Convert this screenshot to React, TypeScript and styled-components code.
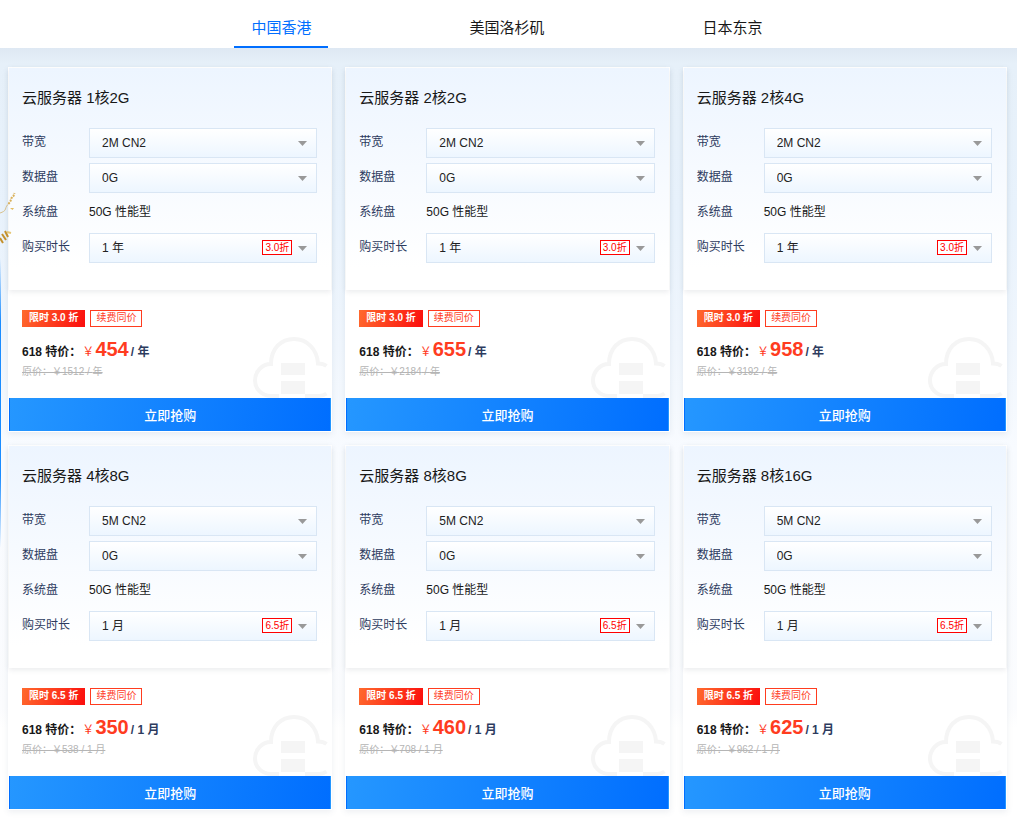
import React, { useState } from "react";
import styled, { createGlobalStyle } from "styled-components";

const GlobalStyle = createGlobalStyle`
  *, *::before, *::after { box-sizing: border-box; }
  body {
    margin: 0;
    background: #fff;
    color: #181818;
    font-family: "Liberation Sans", "Noto Sans CJK SC", sans-serif;
    font-size: 12px;
  }
  button, select { font-family: inherit; }
`;

const TabBar = styled.nav`
  display: flex;
  justify-content: center;
  gap: 124px;
  height: 48px;
  padding-right: 3px;
  background: #fff;
`;

const Tab = styled.button<{ $active: boolean }>`
  height: 48px;
  padding: 10px 17px 0;
  border: 0;
  border-bottom: 2px solid ${(p) => (p.$active ? "#006eff" : "transparent")};
  background: none;
  color: ${(p) => (p.$active ? "#006eff" : "#181818")};
  font-size: 15px;
  line-height: 20px;
  cursor: pointer;
`;

const Stage = styled.main`
  position: relative;
  padding: 19px 10px 14px 8px;
  background: linear-gradient(
    to bottom,
    #dee8f3 0,
    #e6f0f9 16px,
    #e8f2fc 160px,
    #f0f6fd 300px,
    #f8fbff 400px,
    #fbfcfe 660px,
    #fff 680px
  );
`;

const EdgeArt = styled.svg`
  position: absolute;
  left: 0;
  top: 0;
  width: 16px;
  height: 560px;
  pointer-events: none;
`;

const Grid = styled.div`
  display: grid;
  grid-template-columns: repeat(3, minmax(0, 1fr));
  gap: 13px;
`;

const Card = styled.article`
  display: flex;
  flex-direction: column;
  border: 1px solid #fff;
  background: #fff;
  box-shadow: 0 2px 6px rgba(80, 100, 130, 0.1);
`;

const Config = styled.div`
  height: 222px;
  padding: 20px 14px 0 13px;
  background: linear-gradient(#edf5ff, #fff 90%);
  box-shadow: 0 2px 5px rgba(60, 70, 90, 0.1);
`;

const Title = styled.h2`
  margin: 0 0 20px;
  font-size: 15px;
  font-weight: 400;
  line-height: 20px;
`;

const Field = styled.div`
  display: flex;
  align-items: center;
  height: 30px;
  margin-bottom: 5px;
`;

const Label = styled.label`
  flex: 0 0 67px;
  color: #2d3b5e;
  line-height: 16px;
  padding-bottom: 2px;
`;

const Fixed = styled.output`
  line-height: 16px;
  padding-bottom: 2px;
`;

const SelectBox = styled.div`
  position: relative;
  flex: 1;
  min-width: 0;
`;

const Select = styled.select`
  display: block;
  width: 100%;
  height: 30px;
  padding: 0 12px;
  appearance: none;
  border: 1px solid #d9e6f4;
  border-radius: 0;
  background: linear-gradient(#fff, #edf6ff);
  color: #222;
  font-size: 12px;
`;

const Arrow = styled.svg`
  position: absolute;
  right: 10px;
  top: 13px;
  width: 9px;
  height: 5px;
  pointer-events: none;
`;

const Discount = styled.span`
  position: absolute;
  right: 25px;
  top: 7px;
  height: 15px;
  padding: 0 2px;
  border: 1px solid #f00;
  background: #fff;
  color: #f00;
  font-size: 10px;
  line-height: 13px;
  pointer-events: none;
`;

const Offer = styled.div`
  position: relative;
  height: 108px;
  padding: 20px 13px 0;
`;

const Tags = styled.div`
  display: flex;
  gap: 5px;
  font-size: 10px;
`;

const HotTag = styled.span`
  height: 17px;
  padding: 0 7px;
  background: linear-gradient(110deg, #ff6a2e, #fb0d0d);
  color: #fff;
  font-weight: 700;
  line-height: 16px;
`;

const LineTag = styled.span`
  height: 17px;
  padding: 0 5px;
  border: 1px solid #ff3c1f;
  color: #ff3c1f;
  line-height: 14px;
`;

const PriceLine = styled.p`
  display: flex;
  align-items: baseline;
  margin: 10px 0 0;
  color: #181818;
  font-weight: 700;
  line-height: 24px;
`;

const Yen = styled.span`
  margin: 0 1px;
  color: #ff3c1f;
  font-weight: 400;
`;

const Amount = styled.strong`
  color: #ff3c1f;
  font-size: 20px;
`;

const Unit = styled.span`
  margin-left: 2px;
  color: #2d3b5e;
`;

const OldPrice = styled.del`
  display: block;
  color: #b5b5b5;
  font-size: 10px;
  line-height: 16px;
`;

const Cloud = styled.svg`
  position: absolute;
  right: 2px;
  bottom: 0;
  width: 76px;
  height: 62px;
`;

const BuyButton = styled.button`
  height: 33px;
  padding: 0;
  border: solid transparent;
  border-width: 0 1px;
  background: linear-gradient(100deg, #2597ff, #006eff);
  color: #fff;
  font-size: 13px;
  font-weight: 500;
  cursor: pointer;
`;

type Plan = {
  name: string;
  bandwidth: string;
  term: string;
  rate: string;
  price: number;
  old: number;
  unit: string;
};

const plans: Plan[] = [
  { name: "1核2G", bandwidth: "2M CN2", term: "1 年", rate: "3.0", price: 454, old: 1512, unit: "年" },
  { name: "2核2G", bandwidth: "2M CN2", term: "1 年", rate: "3.0", price: 655, old: 2184, unit: "年" },
  { name: "2核4G", bandwidth: "2M CN2", term: "1 年", rate: "3.0", price: 958, old: 3192, unit: "年" },
  { name: "4核8G", bandwidth: "5M CN2", term: "1 月", rate: "6.5", price: 350, old: 538, unit: "1 月" },
  { name: "8核8G", bandwidth: "5M CN2", term: "1 月", rate: "6.5", price: 460, old: 708, unit: "1 月" },
  { name: "8核16G", bandwidth: "5M CN2", term: "1 月", rate: "6.5", price: 625, old: 962, unit: "1 月" },
];

const regions = ["中国香港", "美国洛杉矶", "日本东京"];

function Dropdown({ id, value, rate }: { id: string; value: string; rate?: string }) {
  return (
    <SelectBox>
      <Select id={id} defaultValue={value}>
        <option>{value}</option>
      </Select>
      {rate && <Discount>{rate}折</Discount>}
      <Arrow viewBox="0 0 9 5" aria-hidden="true">
        <path d="M0 0h9L4.500 5z" fill="#999" />
      </Arrow>
    </SelectBox>
  );
}

function PlanCard({ plan, index }: { plan: Plan; index: number }) {
  const id = `plan-${index}`;
  return (
    <Card>
      <Config>
        <Title>云服务器 {plan.name}</Title>
        <Field>
          <Label htmlFor={`${id}-bandwidth`}>带宽</Label>
          <Dropdown id={`${id}-bandwidth`} value={plan.bandwidth} />
        </Field>
        <Field>
          <Label htmlFor={`${id}-data`}>数据盘</Label>
          <Dropdown id={`${id}-data`} value="0G" />
        </Field>
        <Field>
          <Label htmlFor={`${id}-system`}>系统盘</Label>
          <Fixed id={`${id}-system`}>50G 性能型</Fixed>
        </Field>
        <Field>
          <Label htmlFor={`${id}-term`}>购买时长</Label>
          <Dropdown id={`${id}-term`} value={plan.term} rate={plan.rate} />
        </Field>
      </Config>
      <Offer>
        <Cloud viewBox="0 0 76 62" fill="none" aria-hidden="true">
          <path
            d="M26 60H18C9 60 2 53 2 44.500C2 35.500 9 28 18 28C18 12.500 28 3 41 3C54 3 64 13 65 27.500C68 27.500 71 28 73.500 30M52 60H66C69 60 71.500 59 73.500 57.500"
            stroke="#f5f5f5"
            strokeWidth="4"
          />
          <path d="M28 27h24v12H28zM28 45h24v13H28z" fill="#f5f5f5" />
        </Cloud>
        <Tags>
          <HotTag>限时 {plan.rate} 折</HotTag>
          <LineTag>续费同价</LineTag>
        </Tags>
        <PriceLine>
          618 特价：
          <Yen>￥</Yen>
          <Amount>{plan.price}</Amount>
          <Unit>/ {plan.unit}</Unit>
        </PriceLine>
        <OldPrice>
          原价：￥{plan.old} / {plan.unit}
        </OldPrice>
      </Offer>
      <BuyButton type="button">立即抢购</BuyButton>
    </Card>
  );
}

export default function App() {
  const [region, setRegion] = useState(0);
  return (
    <>
      <GlobalStyle />
      <TabBar>
        {regions.map((name, i) => (
          <Tab key={name} type="button" $active={i === region} onClick={() => setRegion(i)}>
            {name}
          </Tab>
        ))}
      </TabBar>
      <Stage>
        <Grid>
          {plans.map((plan, i) => (
            <PlanCard key={plan.name} plan={plan} index={i} />
          ))}
        </Grid>
        <EdgeArt viewBox="0 0 16 560" fill="none" aria-hidden="true">
          <defs>
            <linearGradient id="edge-fade" x1="0" y1="210" x2="0" y2="500" gradientUnits="userSpaceOnUse">
              <stop offset="0" stopColor="#1a8cff" stopOpacity="0" />
              <stop offset="0.220" stopColor="#1a8cff" />
              <stop offset="0.750" stopColor="#1a8cff" />
              <stop offset="1" stopColor="#1a8cff" stopOpacity="0" />
            </linearGradient>
          </defs>
          <path d="M0 210h1v290H0z" fill="url(#edge-fade)" />
          <path d="M0 165c3-1 5-2 5.500-4s1.500-4 3-5" stroke="#d8c08c" />
          <path d="M8.500 156l2-3 1-3 2-2 1-3" stroke="#d9b05a" strokeWidth="2" strokeDasharray="2 1" />
          <path d="M10 160h4l-1.500 2z" fill="#e3bd62" />
          <path d="M0 190l3 5M2 186l4 6M5 183l3 6" stroke="#c4912c" strokeWidth="2" />
          <path d="M7 184l4 1" stroke="#e6c878" strokeWidth="2" />
        </EdgeArt>
      </Stage>
    </>
  );
}
